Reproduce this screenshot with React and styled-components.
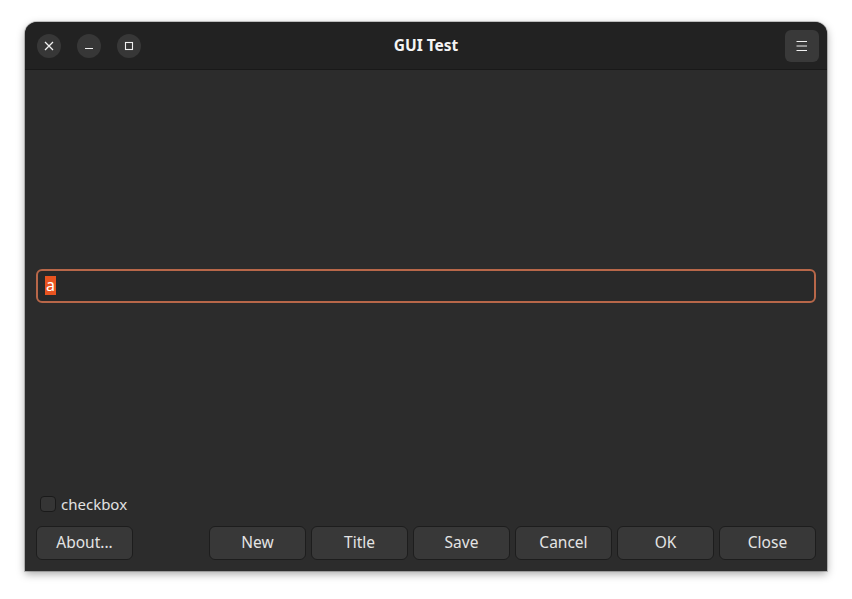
import React, { useState } from "react";
import styled, { createGlobalStyle } from "styled-components";

const GlobalStyle = createGlobalStyle`
  html, body {
    margin: 0;
    background: #ffffff;
  }
  body {
    padding: 22px 25px;
    font-family: "Noto Sans", "Open Sans", sans-serif;
  }
`;

const Window = styled.div`
  width: 802px;
  height: 549px;
  display: flex;
  flex-direction: column;
  background: #2c2c2c;
  border-radius: 12px 12px 0 0;
  box-shadow: 0 3px 9px rgba(0, 0, 0, 0.35), 0 0 0 1px rgba(0, 0, 0, 0.2);
  overflow: hidden;
`;

const HeaderBar = styled.div`
  height: 47px;
  flex-shrink: 0;
  display: flex;
  align-items: center;
  padding: 0 8px 0 12px;
  background: #222222;
  border-bottom: 1px solid #191919;
  position: relative;
`;

const Controls = styled.div`
  display: flex;
  gap: 16px;
`;

const RoundButton = styled.button`
  width: 24px;
  height: 24px;
  border-radius: 50%;
  border: none;
  padding: 0;
  background: #373737;
  color: #f0f0f0;
  display: flex;
  align-items: center;
  justify-content: center;
`;

const Title = styled.div`
  position: absolute;
  left: 0;
  right: 0;
  top: 0;
  bottom: 2px;
  display: flex;
  align-items: center;
  justify-content: center;
  font-size: 15.5px;
  font-weight: 700;
  color: #f4f4f4;
  pointer-events: none;
`;

const MenuButton = styled.button`
  margin-left: auto;
  width: 34px;
  height: 32px;
  border-radius: 6px;
  border: none;
  padding: 0;
  background: #393939;
  color: #f0f0f0;
  display: flex;
  align-items: center;
  justify-content: center;
  position: relative;
`;

const Content = styled.div`
  flex: 1;
  display: flex;
  flex-direction: column;
  padding: 11px;
`;

const Stretch = styled.div`
  flex: 1;
  display: flex;
  align-items: center;
`;

const Entry = styled.div`
  width: 100%;
  height: 34px;
  box-sizing: border-box;
  border: 2px solid #b86749;
  border-radius: 6px;
  background: #292929;
  display: flex;
  align-items: center;
  padding: 0 7px 1px;
  font-size: 16px;
  color: #f2f2f2;
`;

const Selected = styled.span`
  background: #e95420;
  color: #fff;
  line-height: 19px;
  padding: 0 1px;
`;

const CheckRow = styled.label`
  display: flex;
  align-items: center;
  gap: 5px;
  height: 16px;
  margin: 5px 0 14px 4px;
  font-size: 15px;
  color: #e2e2e2;
`;

const CheckBox = styled.span`
  display: block;
  flex-shrink: 0;
  width: 16px;
  height: 16px;
  box-sizing: border-box;
  border: 1px solid #1a1a1a;
  border-radius: 4px;
  background: ${(p) => (p.$checked ? "#e95420" : "#353535")};
`;

const ButtonRow = styled.div`
  display: flex;
  gap: 5px;
`;

const Spacer = styled.div`
  flex: 1;
`;

const PushButton = styled.button`
  width: 97px;
  height: 34px;
  box-sizing: border-box;
  border: 1px solid #1d1d1d;
  border-radius: 6px;
  background: #383838;
  color: #e4e4e4;
  font-family: "Noto Sans", "Open Sans", sans-serif;
  font-size: 15.5px;
  padding: 0 0 3px;
`;

const buttons = ["New", "Title", "Save", "Cancel", "OK", "Close"];

const App = () => {
  const [checked, setChecked] = useState(false);

  return (
    <>
      <GlobalStyle />
      <Window>
        <HeaderBar>
          <Controls>
            <RoundButton>
              <svg width="10" height="10" viewBox="0 0 10 10">
                <path d="M1 1 L9 9 M9 1 L1 9" stroke="currentColor" strokeWidth="1.3" />
              </svg>
            </RoundButton>
            <RoundButton>
              <svg width="10" height="10" viewBox="0 0 10 10">
                <path d="M1 7.5 H9" stroke="currentColor" strokeWidth="1.2" />
              </svg>
            </RoundButton>
            <RoundButton>
              <svg width="10" height="10" viewBox="0 0 10 10">
                <rect x="1.5" y="1.5" width="7" height="7" fill="none" stroke="currentColor" strokeWidth="1.1" />
              </svg>
            </RoundButton>
          </Controls>
          <Title>GUI Test</Title>
          <MenuButton>
            <svg width="12" height="12" viewBox="0 0 12 12">
              <path d="M0.5 1.5 H11 M0.5 6 H11 M0.5 10.5 H11" stroke="currentColor" strokeWidth="1" />
            </svg>
          </MenuButton>
        </HeaderBar>
        <Content>
          <Stretch>
            <Entry>
              <Selected>a</Selected>
            </Entry>
          </Stretch>
          <CheckRow onClick={() => setChecked((c) => !c)}>
            <CheckBox $checked={checked} />
            checkbox
          </CheckRow>
          <ButtonRow>
            <PushButton>About...</PushButton>
            <Spacer />
            {buttons.map((b) => (
              <PushButton key={b}>{b}</PushButton>
            ))}
          </ButtonRow>
        </Content>
      </Window>
    </>
  );
};

export default App;
